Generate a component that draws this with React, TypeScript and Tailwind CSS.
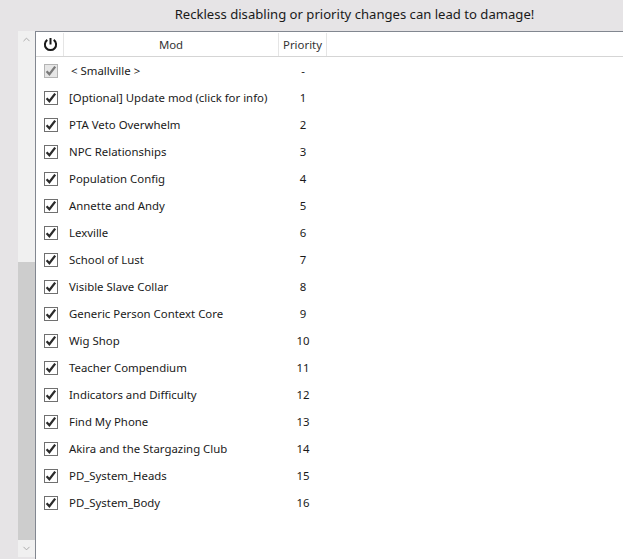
import { ChevronUp, ChevronDown } from 'lucide-react';

const mods = [
  { name: '< Smallville >', priority: '-', locked: true },
  { name: '[Optional] Update mod (click for info)', priority: '1' },
  { name: 'PTA Veto Overwhelm', priority: '2' },
  { name: 'NPC Relationships', priority: '3' },
  { name: 'Population Config', priority: '4' },
  { name: 'Annette and Andy', priority: '5' },
  { name: 'Lexville', priority: '6' },
  { name: 'School of Lust', priority: '7' },
  { name: 'Visible Slave Collar', priority: '8' },
  { name: 'Generic Person Context Core', priority: '9' },
  { name: 'Wig Shop', priority: '10' },
  { name: 'Teacher Compendium', priority: '11' },
  { name: 'Indicators and Difficulty', priority: '12' },
  { name: 'Find My Phone', priority: '13' },
  { name: 'Akira and the Stargazing Club', priority: '14' },
  { name: 'PD_System_Heads', priority: '15' },
  { name: 'PD_System_Body', priority: '16' },
];

const ModRow = ({ name, priority, locked }: { name: string; priority: string; locked?: boolean }) => {
  return (
    <div className="flex h-[27px] items-center">
      <div className="flex w-[28px] shrink-0 justify-center pl-[1px]">
        <div className={`flex h-[14px] w-[14px] items-center justify-center border ${locked ? 'border-[#b4b4b4] bg-[#e6e6e6]' : 'border-[#707070] bg-white'}`}>
          {/* check mark with the heavy short stroke of the native box */}
          <svg width="12" height="12" viewBox="0 0 12 12" fill="none" className={locked ? 'text-[#7a7a7a]' : 'text-[#2b2b2b]'}>
            <path d="M1.6 6.2 L4.4 9.2 L10.2 1.6" stroke="currentColor" strokeWidth="2.3" />
          </svg>
        </div>
      </div>
      <div className={`w-[215px] shrink-0 ${locked ? 'pl-[7px]' : 'pl-[5px]'}`}>{name}</div>
      <div className="w-[48px] shrink-0 text-center">{priority}</div>
    </div>
  );
};

export default function App() {
  return (
    <div className="flex h-[559px] w-[623px] flex-col overflow-hidden bg-[#e6e4e6] font-['Noto_Sans',sans-serif] text-[11.4px] text-[#1a1a1a]">
      <div className="flex h-[31px] shrink-0 items-center justify-center pl-[86px] pb-[1px] text-[13.1px]">
        Reckless disabling or priority changes can lead to damage!
      </div>
      <div className="flex min-h-0 flex-1 pl-[18px]">
        <div className="flex h-[526px] w-[17px] shrink-0 flex-col bg-[#f0f0f0]">
          <div className="flex h-[17px] items-center justify-center">
            <ChevronUp size={11} className="text-[#a6a6a6]" />
          </div>
          <div className="flex-1" />
          <div className="h-[278px] bg-[#cdcdcd]" />
          <div className="flex h-[17px] items-center justify-center">
            <ChevronDown size={11} className="text-[#a6a6a6]" />
          </div>
        </div>
        <div className="flex-1 border-t border-l border-[#828790] bg-white">
          <div className="flex h-[25px] border-b border-[#d5d5d5] pt-[1px]">
            <div className="flex w-[28px] items-center justify-center border-r border-[#e5e5e5] pl-[1px]">
              <svg width="15" height="15" viewBox="0 0 15 15" fill="none" className="text-[#1a1a1a]">
                <path d="M7.5 1 V7.5" stroke="currentColor" strokeWidth="2" />
                <path d="M4.3 2.9 A5.6 5.6 0 1 0 10.7 2.9" stroke="currentColor" strokeWidth="2" />
              </svg>
            </div>
            <div className="flex w-[215px] items-center justify-center border-r border-[#e5e5e5] pt-[1px] text-[#333]">Mod</div>
            <div className="flex w-[48px] items-center justify-center border-r border-[#e5e5e5] pt-[1px] text-[#333]">Priority</div>
          </div>
          {mods.map((mod) => (
            <ModRow key={mod.name} {...mod} />
          ))}
        </div>
      </div>
    </div>
  );
}
